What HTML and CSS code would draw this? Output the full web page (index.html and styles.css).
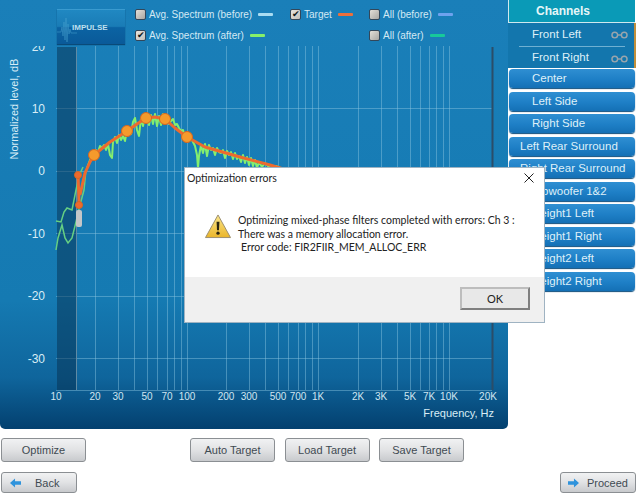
FILE: index.html
```html
<!DOCTYPE html>
<html lang="en">
<head>
  <meta charset="UTF-8">
  <title>Optimization errors</title>
  <link rel="stylesheet" href="styles.css">
</head>
<body>
  <div class="app">
    <div class="top-row">
      <div class="panel">
        <div class="legend">
          <div class="impulse-btn">
            <svg class="impulse-wave" viewBox="0 0 20 35" width="20" height="35"><path d="M0 22H4L5 17 6 26 7 12 8 30 9 8 10 32 11 14 12 24 13 19 14 23H20"/></svg>
            <span>IMPULSE</span>
          </div>
          <div class="legend-grid">
            <div class="item"><span class="box"></span>Avg. Spectrum (before)<i class="swatch sw-before"></i></div>
            <div class="item"><span class="box on">✔</span>Target<i class="swatch sw-target"></i></div>
            <div class="item"><span class="box"></span>All (before)<i class="swatch sw-allb"></i></div>
            <div class="item"><span class="box on">✔</span>Avg. Spectrum (after)<i class="swatch sw-after"></i></div>
            <div class="item"></div>
            <div class="item"><span class="box"></span>All (after)<i class="swatch sw-alla"></i></div>
          </div>
        </div>
        <svg class="chart" viewBox="0 46 508 383" width="508" height="383">
          <path class="grid" d="M56 108.500H492M56 171.500H492M56 233.500H492M56 296.500H492M56 358.500H492M56 390.500H492
            M95.500 46V390M118.500 46V390M134.500 46V390M147.500 46V390M157.500 46V390M167.500 46V390M174.500 46V390M181.500 46V390M187.500 46V390
            M226.500 46V390M249.500 46V390M265.500 46V390M278.500 46V390M288.500 46V390M298.500 46V390M305.500 46V390M312.500 46V390M318.500 46V390
            M358.500 46V390M381.500 46V390M397.500 46V390M410.500 46V390M420.500 46V390M429.500 46V390M436.500 46V390M443.500 46V390M449.500 46V390"/>
          <rect class="low-band" x="57" y="47" width="19" height="343"/>
          <path class="low-edge" d="M76.500 47V390"/>
          <path class="right-edge" d="M492.500 47V390"/>

          <g class="y-labels">
            <text x="45" y="51">20</text>
            <text x="45" y="113">10</text>
            <text x="45" y="175">0</text>
            <text x="45" y="238">-10</text>
            <text x="45" y="300">-20</text>
            <text x="45" y="363">-30</text>
          </g>
          <text class="axis-name" transform="translate(18 109) rotate(-90)">Normalized level, dB</text>
          <g class="x-labels">
            <text x="56" y="400">10</text><text x="95" y="400">20</text><text x="118" y="400">30</text>
            <text x="147" y="400">50</text><text x="167" y="400">70</text><text x="187" y="400">100</text>
            <text x="226" y="400">200</text><text x="249" y="400">300</text><text x="278" y="400">500</text>
            <text x="298" y="400">700</text><text x="318" y="400">1K</text><text x="358" y="400">2K</text>
            <text x="381" y="400">3K</text><text x="410" y="400">5K</text><text x="429" y="400">7K</text>
            <text x="449" y="400">10K</text><text x="488" y="400">20K</text>
          </g>
          <text class="axis-name freq" x="494" y="417">Frequency, Hz</text>

          <path class="thin-green" d="M56 250 58 238 62 225 65 238 68 243 72 238 76 222 80 205 84 190 86 170"/>
          <path class="thin-green" d="M56 221 61 222 64 212 67 208 72 210 76 190 79 176 83 167"/>
          <path class="noisy" d="M87 168 90 160 93 155 96 150 98 152 100 146 102 148 104 145 106 150 108 144 110 155 112 158 113 142 115 137 117 143 119 135 121 140 123 136 125 141 127 130 129 128 131 134 133 122 135 118 137 130 139 136 141 118 143 126 145 116 147 117 149 125 151 115 153 124 155 114 157 126 159 116 161 125 163 114 165 117 167 115 169 124 171 121 173 119 175 125 177 124 179 128 181 131 183 130 185 137 187 134 189 140 191 138 193 142 195 146 197 155 198 168 199 156 201 145 203 153 205 144 207 156 209 145 211 150 213 148 215 155 217 148 219 152 221 153 223 150 225 158 227 151 229 155 231 152 233 159 235 153 237 159 239 156 241 162 243 155 245 163 247 157 249 165 251 158 253 166 255 160 257 168 259 162 262 167 265 163 270 168 276 166 284 170"/>
          <path class="target-line" d="M78 173 79 203M80 195 85 173 90 162 94 155 110 142 127 131 137 124 146 118 155 117 165 119 175 128 187 137 205 147 240 157 270 165 290 171"/>
          <rect class="grey-blob" x="76" y="210" width="6" height="17" rx="2"/>
          <g class="markers">
            <circle class="small" cx="78" cy="175" r="3.500"/>
            <circle class="small" cx="79" cy="205" r="3.500"/>
            <circle cx="94" cy="155" r="5.500"/>
            <circle cx="127" cy="131" r="5.500"/>
            <circle cx="146" cy="118" r="5.500"/>
            <circle cx="165" cy="119" r="5.500"/>
            <circle cx="187" cy="137" r="5.500"/>
          </g>
        </svg>
      </div>

      <div class="channels">
        <div class="channels-head">Channels</div>
        <div class="pair">
          <div class="pair-row">Front Left
            <svg class="link" viewBox="0 0 18 8" width="17" height="8"><circle cx="4" cy="4" r="3"/><circle cx="14" cy="4" r="3"/><path d="M7 4H11"/></svg>
          </div>
          <div class="pair-row second">Front Right
            <svg class="link" viewBox="0 0 18 8" width="17" height="8"><circle cx="4" cy="4" r="3"/><circle cx="14" cy="4" r="3"/><path d="M7 4H11"/></svg>
          </div>
        </div>
        <div class="ch-btn">Center</div>
        <div class="ch-btn">Left Side</div>
        <div class="ch-btn">Right Side</div>
        <div class="ch-btn long">Left Rear Surround</div>
        <div class="ch-btn long">Right Rear Surround</div>
        <div class="ch-btn mid">Subwoofer 1&amp;2</div>
        <div class="ch-btn">Height1 Left</div>
        <div class="ch-btn">Height1 Right</div>
        <div class="ch-btn">Height2 Left</div>
        <div class="ch-btn">Height2 Right</div>
      </div>
    </div>

    <div class="action-row">
      <button class="btn wide">Optimize</button>
      <div class="target-btns">
        <button class="btn wide">Auto Target</button>
        <button class="btn wide">Load Target</button>
        <button class="btn wide">Save Target</button>
      </div>
    </div>

    <div class="nav-row">
      <button class="btn nav back">
        <svg viewBox="0 0 12 10" width="11" height="10"><path d="M0 5 5.500 0V3H12V7H5.500V10Z"/></svg>
        <span>Back</span>
      </button>
      <button class="btn nav proceed">
        <svg viewBox="0 0 12 10" width="11" height="10"><path d="M12 5 6.500 0V3H0V7H6.500V10Z"/></svg>
        <span>Proceed</span>
      </button>
    </div>

    <div class="dialog">
      <div class="dialog-title">
        <span>Optimization errors</span>
        <svg class="close" viewBox="0 0 10 10" width="10" height="10"><path d="M.5 .5 9.500 9.500M9.500 .5 .5 9.500"/></svg>
      </div>
      <div class="dialog-body">
        <svg class="warn" viewBox="0 0 28 26" width="28" height="25">
          <defs>
            <linearGradient id="warnFill" x1="0" y1="0" x2="0" y2="1">
              <stop offset="0" stop-color="#fbe68a"/>
              <stop offset="1" stop-color="#eab52a"/>
            </linearGradient>
          </defs>
          <path class="warn-tri" d="M14 1 27 24.500H1Z"/>
          <path class="warn-mark" d="M12.500 8H15.500L15 17H13Z"/>
          <circle class="warn-dot" cx="14" cy="20" r="1.700"/>
        </svg>
        <div class="dialog-text">
          <div>Optimizing mixed-phase filters completed with errors: Ch 3 :</div>
          <div>There was a memory allocation error.</div>
          <div class="indent">Error code: FIR2FIIR_MEM_ALLOC_ERR</div>
        </div>
      </div>
      <div class="dialog-foot">
        <button class="ok-btn">OK</button>
      </div>
    </div>
  </div>
</body>
</html>
```

FILE: styles.css
```css
*, *::before, *::after { box-sizing:border-box; margin:0; padding:0; }
html, body { width:100%; height:100%; overflow:hidden; background:#fff; font-family:'Liberation Sans',sans-serif; }
.app { position:relative; width:640px; height:496px; overflow:hidden; }
.top-row { display:flex; align-items:flex-start; }

/* main blue panel */
.panel {
  width:508px; height:429px; border-radius:0 0 5px 5px;
  background:linear-gradient(180deg,#1a7fb9 0,#157ab2 70%,#0f659c 88%,#03406f 100%);
}
.legend { display:flex; height:46px; padding:9px 0 0 57px; }
.impulse-btn {
  position:relative; width:68px; height:35px; padding-left:15px;
  display:flex; align-items:center;
  background:linear-gradient(180deg,#2088c2 0,#1a7cb6 48%,#0b63a3 52%,#0a5a99 100%);
  border-top:1px solid #3a9bd0; box-shadow:0 1px 1px #0a4a78;
  color:#bfe0ee; font-size:8px; font-weight:bold;
}
.impulse-wave { position:absolute; left:0; top:0; fill:none; stroke:#4ba6d2; stroke-width:1; opacity:.5; }
.legend-grid {
  display:grid; grid-template-columns:155px 79px auto; grid-template-rows:21.500px 21.500px;
  padding-left:10px; margin-top:-2px; color:#d3e9f4; font-size:10px;
}
.item { display:flex; align-items:center; height:14px; white-space:nowrap; }
.box {
  width:11px; height:11px; margin-right:3px; flex:none;
  border:1px solid #33475a; border-radius:2px;
  background:linear-gradient(135deg,#e4dfd8,#a9a6a2);
  color:#0c1720; font-size:9px; line-height:9px; text-align:center;
}
.box.on { background:linear-gradient(135deg,#e8e4de,#c2bfba); }
.swatch { display:block; width:15px; height:3px; margin-left:6px; border-radius:1px; }
.sw-before { background:#a9dcf2; }
.sw-target { background:#ee6f3a; }
.sw-allb { background:#6ea2ee; }
.sw-after { background:#86f06a; }
.sw-alla { background:#17c99a; }

/* chart */
.chart { display:block; }
.low-band { fill:#06304f; fill-opacity:.5; }
.low-edge { stroke:#5f8ba5; stroke-width:1; }
.grid { fill:none; stroke:#8cc5e0; stroke-opacity:.45; stroke-width:1; }
.right-edge { stroke:#2b4d68; stroke-width:2; }
.y-labels text { fill:#d8edf6; font-size:12px; text-anchor:end; }
.x-labels text { fill:#d0e6f1; font-size:10px; text-anchor:middle; }
.axis-name { fill:#d8edf6; font-size:11px; text-anchor:middle; }
.freq { text-anchor:end; }
.thin-green { fill:none; stroke:#65cf83; stroke-width:1.500; }
.noisy { fill:none; stroke:#84ee6e; stroke-width:2; stroke-linejoin:round; }
.target-line { fill:none; stroke:#ed6a2e; stroke-width:3; stroke-linejoin:round; }
.grey-blob { fill:#c4c6c8; }
.markers circle { fill:#f59a2c; stroke:#d8661f; stroke-width:1; }
.markers .small { fill:#ed6a2e; }

/* channel list */
.channels { width:128px; padding-left:1px; display:flex; flex-direction:column; gap:3.500px; font-size:11.500px; color:#dff0f8; }
.channels-head {
  width:127px; height:23px; line-height:22px; margin-left:-1px; margin-bottom:-3.500px;
  padding-left:27px; background:#0a9ab7; border-left:1px solid #d0e8ee; border-bottom:1px solid #d0e8ee;
  color:#e6f6f8; font-weight:bold; font-size:12px;
}
.pair { width:128px; height:45px; margin-left:-1px; margin-bottom:-2.500px; background:#1376ad; border-right:2px solid #c08f3c; padding-left:11px; }
.pair-row { height:23px; line-height:22px; padding-left:13px; width:106px; position:relative; white-space:nowrap; }
.pair-row.second { height:22px; line-height:21px; border-top:1px solid #6fb0d2; }
.link { position:absolute; left:92px; top:8px; fill:none; stroke:#9aa5ac; stroke-width:1.500; }
.ch-btn {
  width:126px; height:19px; line-height:18px; padding-left:23px; white-space:nowrap;
  border-radius:4px; box-shadow:0 1px 1px #0d4d7d;
  background:linear-gradient(180deg,#2f8fd2 0,#1e7fc6 55%,#1470b5 100%);
}
.ch-btn.long { padding-left:11px; }
.ch-btn.mid { padding-left:19px; }

/* buttons under the chart */
.action-row { display:flex; justify-content:space-between; width:463px; margin:9px 0 0 1px; }
.target-btns { display:flex; gap:9.500px; }
.btn {
  font-family:'Liberation Sans',sans-serif; font-size:11px; color:#3f4a52;
  border:1px solid #8b8f93; border-radius:3px;
  background:linear-gradient(180deg,#f1f2f3 0,#e1e2e4 50%,#c8cacd 100%);
}
.wide { width:85px; height:24px; }
.nav-row { display:flex; justify-content:space-between; width:635px; margin:10px 0 0 1px; }
.nav { width:76px; height:21px; display:flex; align-items:center; fill:#2f93dc; }
.back { padding-left:8px; gap:14px; }
.proceed { padding-left:7px; gap:8px; }

/* error dialog, sits over the page */
.dialog {
  position:absolute; left:184px; top:167px; width:361px; height:156px;
  background:#fff; border:1px solid #9fb3c2; display:flex; flex-direction:column;
  font-family:Lato,sans-serif; color:#222; font-size:10.500px;
}
.dialog-title { display:flex; justify-content:space-between; align-items:center; height:20px; padding:0 10px 0 2px; }
.close { fill:none; stroke:#222; stroke-width:1; }
.dialog-body { flex:1; display:flex; padding:26px 0 0 19px; gap:6px; }
.warn { flex:none; }
.warn-tri { fill:url(#warnFill); stroke:#9a8d6c; stroke-width:1; stroke-linejoin:round; }
.warn-mark, .warn-dot { fill:#2a2410; }
.dialog-text { line-height:13.500px; white-space:nowrap; }
.indent { padding-left:3px; }
.dialog-foot { height:45px; background:#f0f0f0; display:flex; justify-content:flex-end; padding:10px 14px 0 0; }
.ok-btn {
  width:70px; height:23px; font-family:Lato,sans-serif; font-size:11px; color:#222; background:#e8e8e8;
  border:2px solid; border-color:#bdbdbd #7f7f7f #7f7f7f #bdbdbd;
}
```
